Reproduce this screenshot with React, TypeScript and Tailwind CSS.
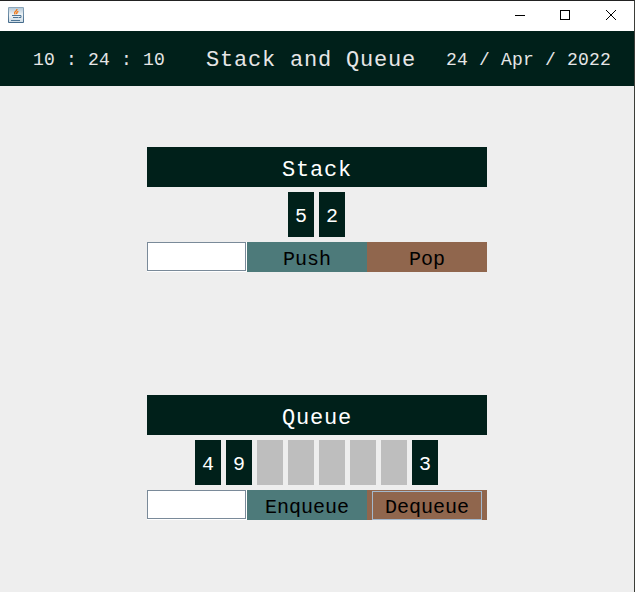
import React from "react";

const mono = "font-['Liberation_Mono','Courier_New',monospace]";

function JavaIcon() {
  return (
    <svg width="16" height="16" viewBox="0 0 16 16" className="block">
      <defs>
        <linearGradient id="tile" x1="0" y1="0" x2="0" y2="1">
          <stop offset="0" stopColor="#8fa9bd" />
          <stop offset="1" stopColor="#42698a" />
        </linearGradient>
        <linearGradient id="face" x1="0" y1="0" x2="0" y2="1">
          <stop offset="0" stopColor="#b5c9d8" />
          <stop offset="0.5" stopColor="#f0f4f7" />
          <stop offset="1" stopColor="#cddbe5" />
        </linearGradient>
      </defs>
      <rect x="0" y="0" width="16" height="16" rx="1" fill="url(#tile)" />
      <rect x="1" y="1" width="14" height="14" fill="url(#face)" />
      <path d="M9 2C9.2 4 6.2 4.4 6.6 6.2c.1.5.4.8.7 1.2M10.4 4.4C8.8 5 8.4 5.8 8.7 7.2" fill="none" stroke="#f07818" strokeWidth="1.3" />
      <path d="M4 8.5h8M5 10.5h5.5M3 13.5h9" fill="none" stroke="#4d7595" strokeWidth="1" />
      <path d="M11.5 8.5h1.5v2h-2" fill="none" stroke="#4d7595" strokeWidth="1" />
    </svg>
  );
}

function TitleBar() {
  return (
    <div className="flex h-[30px] items-start justify-between bg-white pl-2 pr-[18px]">
      <div className="pt-[6px]">
        <JavaIcon />
      </div>
      <div className="flex pt-[9px] text-black">
        <svg width="10" height="10" shapeRendering="crispEdges">
          <rect x="0" y="5" width="10" height="1" />
        </svg>
        <svg width="10" height="10" shapeRendering="crispEdges" className="ml-[35px]">
          <rect x="0.5" y="0.5" width="9" height="9" fill="none" stroke="#000" />
        </svg>
        <svg width="10" height="10" className="ml-9">
          <path d="M0 0L10 10M10 0L0 10" stroke="#000" strokeWidth="1" />
        </svg>
      </div>
    </div>
  );
}

function Header() {
  return (
    <div className="flex h-[55px] items-center bg-[#00201a] pl-[33px] leading-none whitespace-pre text-[#e6e6e6]">
      <span className="w-[173px] pt-[3px] text-[18px] tracking-[0.198px]">10 : 24 : 10</span>
      <span className="w-[240px] pt-[5px] text-[22px] tracking-[0.798px]">Stack and Queue</span>
      <span className="pt-[3px] text-[18px] tracking-[0.198px]">24 / Apr / 2022</span>
    </div>
  );
}

function Cell({ value }: { value: number | null }) {
  if (value === null) return <div className="h-[45px] w-[26px] bg-[#bebebe]" />;
  return (
    <div className="flex h-[45px] w-[26px] items-center justify-center bg-[#00201a] pt-[4px] text-[20px] leading-none text-white">
      {value}
    </div>
  );
}

interface PanelProps {
  title: string;
  cells: (number | null)[];
  cellsInset: string;
  add: string;
  remove: string;
  focused?: boolean;
}

function Panel({ title, cells, cellsInset, add, remove, focused }: PanelProps) {
  return (
    <section className="w-[340px]">
      <h2 className="flex h-10 items-center justify-center bg-[#00201a] pt-[7px] text-[22px] leading-none tracking-[0.798px] text-white">
        {title}
      </h2>
      <div className={`flex gap-[5px] py-[5px] ${cellsInset}`}>
        {cells.map((value, i) => (
          <Cell key={i} value={value} />
        ))}
      </div>
      <div className="flex h-[30px] text-[20px] leading-none text-black">
        <div className="h-[30px] w-[100px] border-r border-b border-white">
          <input aria-label={title} className="block h-[29px] w-[99px] border border-[#7a8a99] bg-white outline-none" />
        </div>
        <button className="flex w-[120px] items-center justify-center bg-[#4d7a7a] pt-[6px]">{add}</button>
        <button className="flex w-[120px] bg-[#90664d] px-[5px] pt-px">
          <span
            className={`flex h-[29px] w-full items-center justify-center border pt-[5px] ${
              focused ? "border-[#a3b8cc]" : "border-transparent"
            }`}
          >
            {remove}
          </span>
        </button>
      </div>
    </section>
  );
}

export default function App() {
  return (
    <div className={`h-[592px] w-[635px] overflow-hidden border-t border-r border-t-[#222222] border-r-[#3b3d38] bg-[#eeeeee] ${mono}`}>
      <TitleBar />
      <Header />
      <main className="flex flex-col items-center gap-[123px] pt-[61px]">
        <Panel title="Stack" cells={[5, 2]} cellsInset="pl-[141px]" add="Push" remove="Pop" />
        <Panel
          title="Queue"
          cells={[4, 9, null, null, null, null, null, 3]}
          cellsInset="pl-[48px]"
          add="Enqueue"
          remove="Dequeue"
          focused
        />
      </main>
    </div>
  );
}
